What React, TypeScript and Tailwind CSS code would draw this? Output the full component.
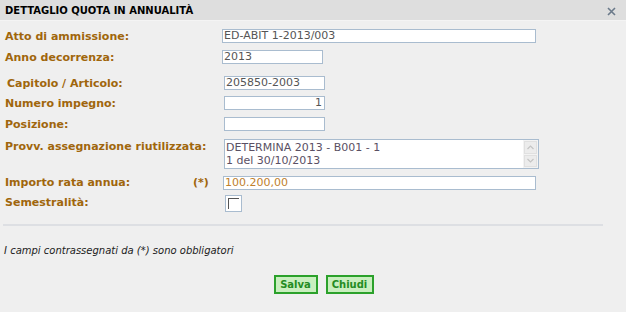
import React from "react";

const font = { fontFamily: '"DejaVu Sans", Verdana, sans-serif' };

function Label({ children, className = "" }: { children: React.ReactNode; className?: string }) {
  return (
    <div className={`text-[11px] font-bold text-[#a0660c] leading-[13px] ${className}`}>{children}</div>
  );
}

const inputCls =
  "h-[14px] bg-white border border-[#a9bccf] text-[11px] leading-[12px] text-[#555] px-[1px] box-border";

export default function App() {
  return (
    <div style={font} className="w-[626px] h-[312px] bg-[#efefef] flex flex-col overflow-hidden">
      <div className="h-[21px] bg-[#dedede] border-b border-[#f4f4f4] flex items-center justify-between pl-[5px] pr-[10px] shrink-0">
        <span className="text-[10px] font-bold text-black">DETTAGLIO QUOTA IN ANNUALITÀ</span>
        <svg width="9" height="9" viewBox="0 0 9 9" className="mt-[2px]">
          <path d="M1 1 L8 8 M8 1 L1 8" stroke="#6b7a8a" strokeWidth="1.6" />
        </svg>
      </div>

      <div className="flex flex-col pt-[8px]">
        <div className="flex items-center h-[14px]">
          <Label className="w-[222px] pl-[5px]">Atto di ammissione:</Label>
          <div className={`${inputCls} w-[314px]`}>ED-ABIT 1-2013/003</div>
        </div>
        <div className="flex items-center h-[14px] mt-[7px]">
          <Label className="w-[222px] pl-[5px]">Anno decorrenza:</Label>
          <div className={`${inputCls} w-[101px]`}>2013</div>
        </div>
        <div className="flex items-center h-[14px] mt-[12px]">
          <Label className="w-[224px] pl-[7px]">Capitolo / Articolo:</Label>
          <div className={`${inputCls} w-[101px]`}>205850-2003</div>
        </div>
        <div className="flex items-center h-[14px] mt-[6px]">
          <Label className="w-[224px] pl-[5px]">Numero impegno:</Label>
          <div className={`${inputCls} w-[101px] text-right pr-[2px]`}>1</div>
        </div>
        <div className="flex items-center h-[14px] mt-[7px]">
          <Label className="w-[224px] pl-[5px]">Posizione:</Label>
          <div className={`${inputCls} w-[101px]`}></div>
        </div>
        <div className="flex items-start mt-[8px]">
          <Label className="w-[224px] pl-[5px] pt-[1px]">Provv. assegnazione riutilizzata:</Label>
          <div className="w-[315px] h-[30px] bg-white border border-[#a9bccf] flex box-border">
            <div className="flex-1 text-[11px] leading-[13px] text-[#5a5064] pl-[1px] pt-[1px]">
              <div>DETERMINA 2013 - B001 - 1</div>
              <div>1 del 30/10/2013</div>
            </div>
            <div className="w-[15px] flex flex-col gap-[1px] p-[1px] bg-[#f3f3f3]">
              <div className="flex-1 bg-[#ececec] border border-[#e0e0e0] flex items-center justify-center">
                <svg width="7" height="5" viewBox="0 0 7 5">
                  <path d="M0.5 4 L3.5 1 L6.5 4" stroke="#c4c4c4" strokeWidth="1.2" fill="none" />
                </svg>
              </div>
              <div className="flex-1 bg-[#ececec] border border-[#e0e0e0] flex items-center justify-center">
                <svg width="7" height="5" viewBox="0 0 7 5">
                  <path d="M0.5 1 L3.5 4 L6.5 1" stroke="#c4c4c4" strokeWidth="1.2" fill="none" />
                </svg>
              </div>
            </div>
          </div>
        </div>
        <div className="flex items-center h-[13px] mt-[7px]">
          <Label className="w-[193px] pl-[5px]">Importo rata annua:</Label>
          <Label className="w-[30px]">(*)</Label>
          <div className={`${inputCls} h-[13px] w-[313px] text-[#c0802c]`}>100.200,00</div>
        </div>
        <div className="flex items-start mt-[6px]">
          <Label className="w-[225px] pl-[5px] pt-[1px]">Semestralità:</Label>
          <div className="w-[17px] h-[17px] border border-[#a9bccf] bg-white p-[2px] box-border">
            <div className="w-full h-full border-l border-t border-[#555] bg-white"></div>
          </div>
        </div>

        <div className="mx-[3px] mt-[12px] h-[2px] bg-[#dddfe3] w-[600px]"></div>

        <div className="mt-[18px] pl-[4px] text-[10px] italic text-[#222] leading-[13px]">
          I campi contrassegnati da (*) sono obbligatori
        </div>

        <div className="flex justify-center gap-[8px] mt-[18px] pl-[21px]">
          <button className="w-[44px] h-[19px] bg-[#c9efbf] border-2 border-[#2ba12b] text-[10px] font-bold text-[#238c23] leading-none">
            Salva
          </button>
          <button className="w-[48px] h-[19px] bg-[#c9efbf] border-2 border-[#2ba12b] text-[10px] font-bold text-[#238c23] leading-none">
            Chiudi
          </button>
        </div>
      </div>
    </div>
  );
}
